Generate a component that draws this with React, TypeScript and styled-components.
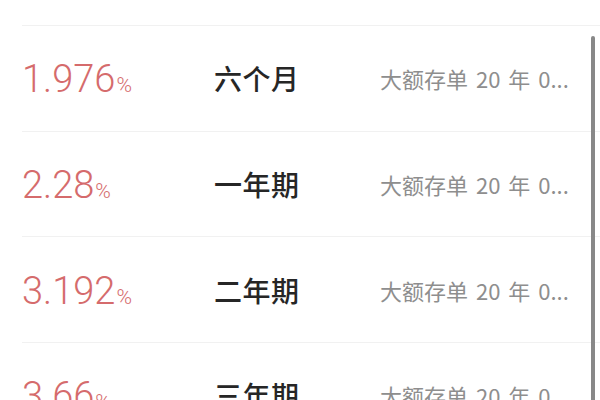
import React from "react";
import styled, { createGlobalStyle } from "styled-components";

const Global = createGlobalStyle`
  html, body { margin: 0; padding: 0; background: #ffffff; overflow: hidden; }
  body { font-family: "Noto Sans CJK SC", sans-serif; }
`;

const Screen = styled.div`
  position: relative;
  width: 600px;
  height: 400px;
  overflow: hidden;
  background: #ffffff;
`;

const TopGap = styled.div`
  height: 26px;
  margin-left: 22px;
  border-bottom: 1px solid #f1f1f1;
  box-sizing: border-box;
`;

const List = styled.div`
  display: flex;
  flex-direction: column;
`;

const Row = styled.div`
  display: grid;
  grid-template-columns: 192px 166px 1fr;
  align-items: center;
  height: 105.7px;
  margin-left: 22px;
  border-bottom: 1px solid #f1f1f1;
  box-sizing: border-box;
`;

const Rate = styled.div`
  font-family: Roboto, "Liberation Sans", sans-serif;
  font-weight: 300;
  font-size: 38px;
  color: #d56b6c;
  line-height: 1;
  white-space: nowrap;
  padding-top: 2px;
`;

const Percent = styled.span`
  font-size: 21px;
  margin-left: 1px;
`;

const Term = styled.div`
  font-family: "Noto Sans CJK SC", sans-serif;
  font-weight: 500;
  font-size: 28px;
  letter-spacing: 0.5px;
  color: #262626;
  line-height: 1;
  white-space: nowrap;
`;

const Desc = styled.div`
  font-family: "Noto Sans CJK SC", sans-serif;
  font-weight: 400;
  font-size: 22px;
  word-spacing: 3px;
  color: #8e8e8e;
  line-height: 1;
  white-space: nowrap;
`;

const ScrollThumb = styled.div`
  position: absolute;
  left: 591px;
  top: 36px;
  width: 4px;
  height: 380px;
  border-radius: 2px;
  background: #888888;
`;

const rows = [
  { rate: "1.976", term: "六个月" },
  { rate: "2.28", term: "一年期" },
  { rate: "3.192", term: "二年期" },
  { rate: "3.66", term: "三年期" },
];

export default function App() {
  return (
    <Screen>
      <Global />
      <TopGap />
      <List>
        {rows.map((r) => (
          <Row key={r.term}>
            <Rate>
              {r.rate}
              <Percent>%</Percent>
            </Rate>
            <Term>{r.term}</Term>
            <Desc>大额存单 20 年 0...</Desc>
          </Row>
        ))}
      </List>
      <ScrollThumb />
    </Screen>
  );
}
